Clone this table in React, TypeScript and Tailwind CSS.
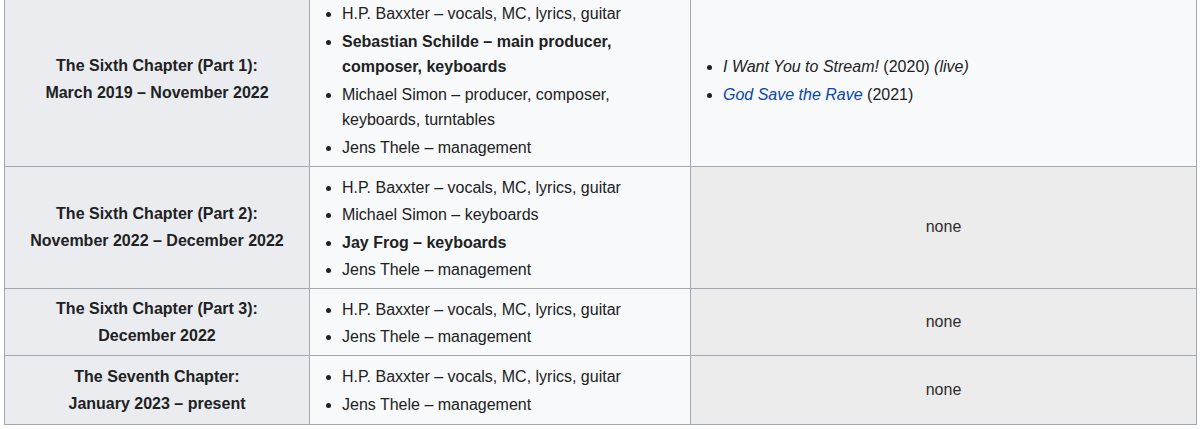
import React from 'react';

type Member = { text: string; bold?: boolean };

type Era = {
  title: string;
  dates: string;
  members: Member[];
  releases?: React.ReactNode[];
};

const eras: Era[] = [
  {
    title: 'The Sixth Chapter (Part 1):',
    dates: 'March 2019 – November 2022',
    members: [
      { text: 'H.P. Baxxter – vocals, MC, lyrics, guitar' },
      { text: 'Sebastian Schilde – main producer, composer, keyboards', bold: true },
      { text: 'Michael Simon – producer, composer, keyboards, turntables' },
      { text: 'Jens Thele – management' },
    ],
    releases: [
      <>
        <i>I Want You to Stream!</i> (2020) <i>(live)</i>
      </>,
      <>
        <a href="#" className="text-[#0645ad] italic">God Save the Rave</a> (2021)
      </>,
    ],
  },
  {
    title: 'The Sixth Chapter (Part 2):',
    dates: 'November 2022 – December 2022',
    members: [
      { text: 'H.P. Baxxter – vocals, MC, lyrics, guitar' },
      { text: 'Michael Simon – keyboards' },
      { text: 'Jay Frog – keyboards', bold: true },
      { text: 'Jens Thele – management' },
    ],
  },
  {
    title: 'The Sixth Chapter (Part 3):',
    dates: 'December 2022',
    members: [
      { text: 'H.P. Baxxter – vocals, MC, lyrics, guitar' },
      { text: 'Jens Thele – management' },
    ],
  },
  {
    title: 'The Seventh Chapter:',
    dates: 'January 2023 – present',
    members: [
      { text: 'H.P. Baxxter – vocals, MC, lyrics, guitar' },
      { text: 'Jens Thele – management' },
    ],
  },
];

export default function App() {
  return (
    <div className="bg-white h-[429px] overflow-hidden font-['Liberation_Sans',Arial,sans-serif] text-[16px] leading-[25.6px] text-[#202122]">
      <table className="ml-[4px] -mt-[8px] w-[1193px] table-fixed border-collapse border border-[#a2a9b1] bg-[#f8f9fa]">
        <colgroup>
          <col className="w-[305px]" />
          <col className="w-[381px]" />
          <col />
        </colgroup>
        <tbody>
          {eras.map((era, idx) => (
            <tr key={era.title}>
              <th className="border border-[#a2a9b1] bg-[#eaecf0] px-[6.4px] py-[3.2px] text-center font-bold align-middle leading-[27px]">
                {era.title}
                <br />
                {era.dates}
              </th>
              <td
                className={`border border-[#a2a9b1] px-[6.4px] pt-[3.2px] align-middle ${
                  idx === eras.length - 1 ? 'pb-[5px]' : 'pb-[3.2px]'
                }`}
              >
                <ul className="list-disc mt-[5px] ml-[25.6px]">
                  {era.members.map((m) => (
                    <li key={m.text} className={`mb-[1.9px] ${m.bold ? 'font-bold' : ''}`}>
                      {m.text}
                    </li>
                  ))}
                </ul>
              </td>
              {era.releases ? (
                <td className="border border-[#a2a9b1] px-[6.4px] py-[3.2px] align-middle">
                  <ul className="list-disc mt-[5px] ml-[25.6px]">
                    {era.releases.map((r, i) => (
                      <li key={i} className="mb-[1.9px]">{r}</li>
                    ))}
                  </ul>
                </td>
              ) : (
                <td className="border border-[#a2a9b1] bg-[#ececec] text-[#2c2c2c] px-[6.4px] py-[3.2px] text-center align-middle">
                  none
                </td>
              )}
            </tr>
          ))}
        </tbody>
      </table>
    </div>
  );
}
